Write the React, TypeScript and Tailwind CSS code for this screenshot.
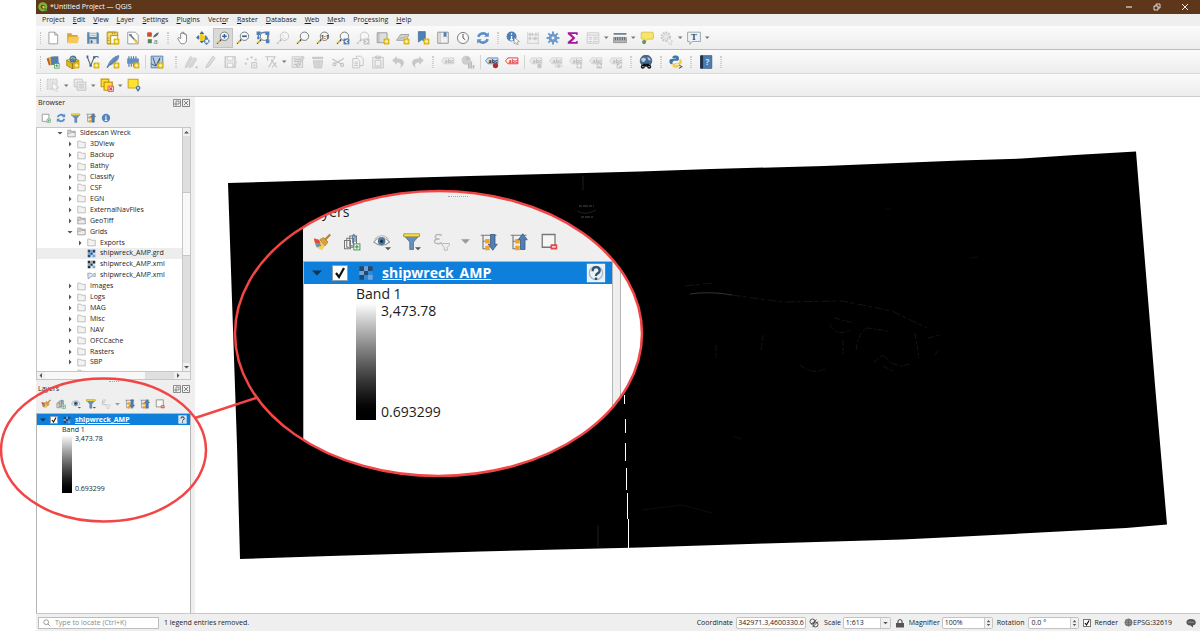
import React, { useId, useState } from 'react';

const GOLD = '#d9b310';
const BLUE = '#4f7fb5';
const GRAY = '#6f7471';

const NewBadge: React.FC<{ x?: number; y?: number }> = ({ x = 13, y = 13 }) => (
  <g>
    <rect x={x} y={y} width="10" height="10" rx="1.5" fill={GOLD} />
    <path
      d={`M${x + 5} ${y + 1.5}v7M${x + 1.5} ${y + 5}h7M${x + 2.5} ${y + 2.5}l5 5M${x + 7.5} ${y + 2.5}l-5 5`}
      stroke="#fff8c9"
      strokeWidth="1.2"
    />
  </g>
);

const GreenPlus: React.FC = () => (
  <g>
    <rect x="14.5" y="14.5" width="8" height="8" fill="#fff" stroke="#4a9a59" strokeWidth="1.4" />
    <path d="M18.5 16v5M16 18.5h5" stroke="#4a9a59" strokeWidth="1.8" />
  </g>
);

const Lens: React.FC<{ children?: React.ReactNode }> = ({ children }) => (
  <g>
    <path d="M9 14.5L6.5 17" stroke="#333" strokeWidth="2.5" />
    <path d="M7 16.5L2 21.5" stroke="#d8b52c" strokeWidth="3.2" />
    <path d="M3 22l-1.5-1.5" stroke="#222" strokeWidth="1.5" />
    <circle cx="14.5" cy="9" r="7.2" fill="#f6f8f8" stroke={GRAY} strokeWidth="1.6" />
    {children}
  </g>
);

const Tag: React.FC<{ color?: string; fill?: string; text?: string }> = ({
  color = '#9b9b92',
  fill = '#deded4',
  text = '#555',
}) => (
  <g>
    <path d="M1 10l4-5h17v10H5z" fill={fill} stroke={color} strokeWidth="1.5" />
    <text x="6" y="13" fontSize="9" fontWeight="bold" fontFamily="Open Sans, sans-serif" fill={text}>
      abc
    </text>
  </g>
);

const Checker: React.FC<{ light?: string; dark?: string }> = ({ light = '#6fa3d8', dark = '#24496e' }) => (
  <g>
    <path d="M2 2h20v20H2z" fill={light} opacity=".3" />
    <path d="M2 2h7v7H2zM15 2h7v7h-7zM9 9h6v6H9zM2 15h7v7H2z" fill={dark} />
    <path d="M9 2h6v7H9zM2 9h7v6H2zM15 15h7v7h-7z" fill={light} />
  </g>
);

const icons: Record<string, React.ReactNode> = {
  new: <path d="M5 2h10l5 5v15H5zM15 2v5h5" fill="#fff" stroke="#8a8a8a" strokeWidth="1.3" />,
  open: (
    <g>
      <path d="M2 4h7l2 3h9v13H2z" fill="#d8a530" />
      <path d="M5 10h18l-3 11H2z" fill="#f6c95b" />
    </g>
  ),
  save: (
    <g>
      <path d="M2 2h18l2 2v18H2z" fill="#5b86ad" />
      <path d="M6 2h12v8H6z" fill="#f5f5f5" />
      <path d="M7 4.5h10M7 7.5h10" stroke="#888" />
      <path d="M6 14h12v8H6z" fill="#dcdcdc" />
      <path d="M8 16h3v5H8z" fill="#44617d" />
    </g>
  ),
  layout: (
    <g>
      <path d="M4 2h11l5 5v15H4z" fill="#fff" stroke={GOLD} strokeWidth="2" />
      <path d="M2 2v20h6V8h12V2z" fill="#f5dd72" stroke="#a9860b" strokeWidth="1.5" />
      <path d="M11 3v3M15 3v3M3 12h3M3 16h3" stroke="#7a6208" />
      <NewBadge />
    </g>
  ),
  layoutManager: (
    <g>
      <path d="M3 2h13l5 5v15H3z" fill="#fff" stroke="#8a8a8a" strokeWidth="1.4" />
      <path d="M7 7l11 11" stroke="#5f6f7e" strokeWidth="2.5" />
      <path d="M5 5h5v4H6z" fill="#7a8792" />
      <path d="M15 13l7 8-3 2-6-7z" fill="#e8c33b" />
    </g>
  ),
  style: (
    <g>
      <rect x="2" y="2" width="8" height="8" rx="2" fill="#c94f2c" />
      <rect x="3" y="14" width="7" height="7" fill="#4f8a5c" />
      <path d="M12 11c1-4 5-8 10-9-1 5-4 8-9 9z" fill="#5a6c72" />
      <text x="13" y="22" fontSize="13" fontFamily="Open Sans, sans-serif" fill="#4f8a5c">a</text>
    </g>
  ),
  hand: (
    <path
      d="M8 13V5c0-2 2.5-2 2.5 0V3c0-2 2.5-2 2.5 0v2c0-2 2.5-2 2.5 0v2c0-2 2.5-2 2.5 0v8c0 4-2 7-6 7-3 0-5-1-6-4l-3-5c0-2 2-2 3-1z"
      fill="#fff"
      stroke="#707070"
      strokeWidth="1.4"
    />
  ),
  pan: (
    <g>
      <path d="M7 3h6v5h5v6h-5v5H7v-5H2V8h5z" fill="#efca2d" />
      <path d="M10 0l4 5H6zM0 11l5-4v8zM20 11l-4-4v8zM10 21l4-4H6z" fill="#3f6fa8" />
      <path d="M18 10l4 5h-8zM18 24l4-4h-8zM12 17l4-3v7zM24 17l-3-3v7z" fill={BLUE} />
      <path d="M8 9h4v4H8z" fill="#efca2d" />
    </g>
  ),
  zoomIn: (
    <Lens>
      <path d="M14.5 5v8M10.5 9h8" stroke="#38639b" strokeWidth="2.5" />
    </Lens>
  ),
  zoomOut: (
    <Lens>
      <path d="M10.5 9h8" stroke="#38639b" strokeWidth="3" />
    </Lens>
  ),
  zoomFull: (
    <g>
      <Lens />
      <path d="M1 1h7v6H1zM16 1h7v6h-7zM17 14h6v7h-6zM2 10h4v4H2z" fill={BLUE} />
      <path d="M8 3h8M20 7v8M4 6v5" stroke={BLUE} strokeWidth="2" />
    </g>
  ),
  zoomLayer: <Lens />,
  zoomSelection: (
    <Lens>
      <path d="M12 5v8h5" stroke="#aaa" fill="none" />
    </Lens>
  ),
  zoomNative: (
    <Lens>
      <text x="8" y="13" fontSize="10" fontWeight="bold" fontFamily="Open Sans, sans-serif" fill="#444">1:1</text>
    </Lens>
  ),
  zoomLast: (
    <g>
      <Lens />
      <path d="M13 13h10v10H13z" fill={BLUE} />
      <path d="M20 15l-4 3 4 3" fill="none" stroke="#fff" strokeWidth="1.8" />
    </g>
  ),
  zoomNext: (
    <g>
      <Lens />
      <path d="M13 13h10v10H13z" fill={BLUE} />
      <path d="M16 15l4 3-4 3" fill="none" stroke="#fff" strokeWidth="1.8" />
    </g>
  ),
  mapView: (
    <g>
      <path d="M2 3h17v17H2z" fill="#dedede" stroke="#8f8f8f" strokeWidth="1.4" />
      <path d="M5 3v17" stroke="#8f8f8f" />
      <NewBadge />
    </g>
  ),
  view3d: (
    <g>
      <path d="M1 16L8 6h14l-4 10z" fill="#d4d4d4" stroke="#8f8f8f" strokeWidth="1.3" />
      <path d="M6 14c3-6 6 2 12-6" stroke="#8f8f8f" fill="none" />
      <NewBadge />
    </g>
  ),
  bookmarkNew: (
    <g>
      <path d="M4 1h12v18l-6-4-6 4z" fill={BLUE} stroke="#3b6290" />
      <NewBadge />
    </g>
  ),
  bookmarks: (
    <g>
      <path d="M3 2h18v19H3z" fill="#f1f1f1" stroke="#8f8f8f" strokeWidth="1.6" />
      <path d="M7 2v19" stroke="#8f8f8f" />
      <path d="M13 2h5v9l-2.5-2-2.5 2z" fill={BLUE} />
    </g>
  ),
  clock: (
    <g>
      <circle cx="12" cy="12" r="9.5" fill="#fafafa" stroke="#7d7d7d" strokeWidth="1.7" />
      <path d="M12 5v7l4 3" fill="none" stroke="#555" strokeWidth="1.7" />
    </g>
  ),
  refresh: (
    <g fill="none" stroke="#5c8fc9" strokeWidth="4.5">
      <path d="M4 10c2-6 10-8 15-3M20 14c-2 6-10 8-15 3" />
      <path d="M22 2v8h-8zM2 22v-8h8z" fill="#5c8fc9" stroke="none" />
    </g>
  ),
  identify: (
    <g>
      <circle cx="9.5" cy="9.5" r="8.5" fill={BLUE} />
      <path d="M9.5 4v2.5M9.5 8.5V15M7 15h5" stroke="#fff" strokeWidth="2.2" />
      <path d="M14 11l9 7-4 1 2 4-2 1-2-4-3 2z" fill="#fff" stroke="#777" />
    </g>
  ),
  abacus: (
    <g fill="none" stroke="#888" strokeWidth="1.4">
      <path d="M3 2v20M21 2v20M3 6h18M3 13h18M2 21h20" />
      <path d="M7 3v6M11 3v6M17 3v6M7 10v6M14 10v6M17 10v6" strokeWidth="2.5" />
    </g>
  ),
  gear: (
    <g fill="none" stroke="#6c9ad0">
      <circle cx="12" cy="12" r="5" strokeWidth="5" />
      <path d="M12 1v5M12 18v5M1 12h5M18 12h5M4 4l4 4M16 16l4 4M20 4l-4 4M8 16l-4 4" strokeWidth="3.4" />
    </g>
  ),
  sigma: <path d="M20 7V2H3v3l8 7-8 7v3h17v-5h-2l-1 2H9l7-7-7-7h8l1 2z" fill="#a5159c" />,
  table: (
    <g>
      <path d="M2 3h20v18H2z" fill="#eee" stroke="#888" strokeWidth="1.5" />
      <path d="M2 7h20M5 11h5M5 14h5M5 18h5M12 11h8M12 14h8M12 18h8" stroke="#888" strokeWidth="1.5" />
    </g>
  ),
  ruler: (
    <g>
      <path d="M1 5h22" stroke="#4d6a88" strokeWidth="2.5" />
      <path d="M1 11h22v9H1z" fill="#b4b4b4" stroke="#737373" />
      <path d="M4 11v5M8 11v5M12 11v5M16 11v5M20 11v5" stroke="#444" strokeWidth="1.3" />
    </g>
  ),
  mapTip: (
    <g>
      <path d="M4 2h17q2 0 2 2v8q0 2-2 2H13l-5 6V14H4q-2 0-2-2V4q0-2 2-2z" fill="#f6e46c" stroke="#c9ad20" />
      <circle cx="7" cy="19" r="3.5" fill="#64935f" />
    </g>
  ),
  action: (
    <g>
      <circle cx="10" cy="10" r="7" fill="none" stroke="#888" strokeWidth="4" strokeDasharray="3 1.5" />
      <circle cx="10" cy="10" r="4" fill="#ddd" stroke="#888" />
      <path d="M13 12l9 6-4 1 2 4-3 1-4-8z" fill="#fff" stroke="#777" />
    </g>
  ),
  textNote: (
    <g>
      <path d="M1 2h22v16H9l-4 5v-5H1z" fill="#edf3f5" stroke="#8a9ca3" strokeWidth="1.4" />
      <text x="7" y="15" fontSize="15" fontWeight="bold" fontFamily="Liberation Serif, serif" fill="#444">T</text>
    </g>
  ),
  dataSource: (
    <g>
      <path d="M1 6l12-3 3 11-11 4z" fill="#b95c2a" />
      <path d="M4 4l13-2 3 13-12 3z" fill="#e5b53b" />
      <path d="M8 3l13-1 1 14-13 1z" fill="#4f7fb5" />
      <GreenPlus />
    </g>
  ),
  geopackage: (
    <g>
      <path d="M1 9l10-4 11 4-11 6z" fill="#f6dc6f" stroke="#8c6f11" />
      <circle cx="12" cy="7" r="5.5" fill="#4f7fb5" stroke="#2b4f75" />
      <path d="M8 6q4-3 8 1" stroke="#9fd09c" strokeWidth="2" fill="none" />
      <path d="M1 9l10 6v9L1 18zM22 9l-11 6v9l11-6z" fill="#e2b71d" stroke="#8c6f11" />
      <NewBadge />
    </g>
  ),
  shapefile: (
    <g>
      <path d="M2 3l6 15L14 4q4-3 8 0" fill="none" stroke="#47657c" strokeWidth="1.8" />
      <path d="M1 1h3v4H1zM6 16h4v4H6zM12 2h4v4h-4z" fill="#47657c" />
      <NewBadge />
    </g>
  ),
  spatialite: (
    <g>
      <path d="M2 22C5 11 12 3 22 1c0 8-7 14-18 17z" fill="#6b97c7" stroke="#3e658f" />
      <path d="M2 22L18 5" stroke="#2e5074" />
      <NewBadge />
    </g>
  ),
  virtualLayer: (
    <g>
      <path d="M5 2v18M9 2v18M13 2v18M17 2v18" stroke="#4c6d91" strokeWidth="1.8" />
      <path d="M2 6h20v9H2z" fill="#5f8fc4" />
      <NewBadge />
    </g>
  ),
  meshLayer: (
    <g>
      <path d="M2 2h20v20H2z" fill="#b8cce2" stroke="#587fa8" strokeWidth="1.6" />
      <path d="M5 4l5 15L17 5M2 15l8 4M17 5l-3 10" fill="none" stroke="#34536f" strokeWidth="1.5" />
      <NewBadge />
    </g>
  ),
  pencils: (
    <g>
      <path d="M3 17L11 2l4 3L7 20l-5 2zM10 18L18 4l4 3-8 13-5 2z" fill="#aaa" stroke="#888" />
      <path d="M19 20h5l-2.5 3z" fill="#444" />
    </g>
  ),
  pencil: <path d="M5 17L15 2l4 3L9 19l-6 3z" fill="#bbb" stroke="#777" strokeWidth="1.4" />,
  saveEdit: (
    <g>
      <path d="M2 3h17v18H2z" fill="#ddd" stroke="#777" strokeWidth="2" />
      <path d="M6 3h9v6H6zM6 14h9v7H6z" fill="#fff" stroke="#777" />
      <path d="M14 20l6-10 3 2-6 9z" fill="#aaa" />
    </g>
  ),
  addPoint: (
    <g fill="#888">
      <circle cx="3" cy="15" r="2" />
      <circle cx="6" cy="7" r="2" />
      <circle cx="13" cy="4" r="2" />
      <circle cx="20" cy="8" r="2" />
      <path d="M13 13h9v9h-9z" fill="#eee" stroke="#777" strokeWidth="1.5" />
      <path d="M17.5 15v5M15 17.5h5" stroke="#777" />
    </g>
  ),
  vertex: (
    <g fill="none" stroke="#777" strokeWidth="1.8">
      <path d="M2 3h17L8 21M6 2v8M12 8l10 13M21 13l-7 8" />
    </g>
  ),
  modify: (
    <g>
      <path d="M2 3h18v18H2z" fill="#ddd" stroke="#777" strokeWidth="1.4" />
      <path d="M5 7h12M5 11h12M5 16h12" stroke="#777" strokeWidth="2" />
      <path d="M10 17L20 2l3 2-10 15-4 1z" fill="#aaa" stroke="#666" />
    </g>
  ),
  trash: (
    <g>
      <path d="M2 3h19v4H2z" fill="#888" />
      <path d="M4 10h16l-2 12H6z" fill="#bbb" stroke="#777" strokeWidth="1.5" />
      <path d="M9 11v9M12 11v9M15 11v9" stroke="#777" />
    </g>
  ),
  cut: (
    <g fill="none" stroke="#777" strokeWidth="2">
      <path d="M2 7l15 8M22 6L8 14" />
      <circle cx="6" cy="16" r="2.500" />
      <circle cx="19" cy="17" r="2.500" />
    </g>
  ),
  copy: (
    <g fill="#f4f4f4" stroke="#777" strokeWidth="1.5">
      <path d="M9 2h8l4 4v12H9z" />
      <path d="M3 6h8l4 4v12H3zM6 12h6M6 15h6M6 18h6" />
    </g>
  ),
  paste: (
    <g fill="#eee" stroke="#777" strokeWidth="1.6">
      <path d="M3 4h18v18H3zM8 2h8v4H8zM7 9h10v10H7z" />
    </g>
  ),
  undo: <path d="M2 9l8-7v4c8 0 13 3 12 9-1 3-4 6-7 7 4-5 2-9-5-9v4z" fill="#888" />,
  redo: <path d="M22 9l-8-7v4C6 6 1 9 2 15c1 3 4 6 7 7-4-5-2-9 5-9v4z" fill="#888" />,
  tag: <Tag />,
  diagram: (
    <g>
      <circle cx="9" cy="9" r="7" fill="#999" stroke="#666" />
      <path d="M9 9V2l7 5zM12 14h3v9h-3zM16 11h3v12h-3zM20 17h3v6h-3z" fill="#666" />
    </g>
  ),
  tagPinned: (
    <g>
      <Tag color="#4f86c6" fill="#cfe2f8" text="#222" />
      <circle cx="18" cy="18" r="4.5" fill="#b3282d" />
    </g>
  ),
  tagRed: <Tag color="#e32626" fill="#fff" text="#e32626" />,
  tagDot: (
    <g>
      <Tag />
      <circle cx="18" cy="19" r="4" fill="#888" />
    </g>
  ),
  tagEye: (
    <g>
      <Tag />
      <path d="M10 19q6-6 13 0-6 5-13 0z" fill="#eee" stroke="#777" />
      <circle cx="16.500" cy="19" r="2" fill="#777" />
    </g>
  ),
  tagMove: (
    <g>
      <Tag />
      <path d="M13 14h9v9h-9z" fill="#888" />
      <path d="M17.5 15v7M14 18.5h7" stroke="#fff" strokeWidth="2" />
    </g>
  ),
  tagRotate: (
    <g>
      <Tag />
      <path d="M13 14h9v9h-9z" fill="#888" />
      <path d="M15 20q2-6 5 0" fill="none" stroke="#fff" strokeWidth="2" />
    </g>
  ),
  tagEdit: (
    <g>
      <Tag />
      <path d="M13 14h9v9h-9z" fill="#888" />
      <path d="M15 21l6-6" stroke="#fff" strokeWidth="2" />
    </g>
  ),
  globeSearch: (
    <g>
      <circle cx="12" cy="10" r="10" fill="#44688f" stroke="#29435f" />
      <path d="M4 6q5-3 8 1-1 5-5 5-4-2-3-6zM14 4q5 0 6 5-4 2-6-5z" fill="#b9cde3" />
      <path d="M7 15h10v4H7z" fill="#111" />
      <circle cx="6.5" cy="20" r="3.500" fill="#111" />
      <circle cx="17.5" cy="20" r="3.500" fill="#111" />
      <path d="M5 20h3M16 20h3" stroke="#ccc" strokeWidth="1.5" />
    </g>
  ),
  python: (
    <g>
      <path d="M11 1C6 1 6 3 6 6h6v1H4c-3 0-4 3-3 6 1 3 3 3 5 3v-3c0-2 2-3 4-3h4c2 0 3-1 3-3V5c0-3-3-4-6-4z" fill="#3c78aa" />
      <path d="M11 22c5 0 6-2 6-5h-6v-1h8c3 0 4-3 3-6-1-3-2-3-4-3v3c0 2-2 4-4 4h-4c-2 0-4 1-4 3v2c0 2 2 3 5 3z" fill="#fbcf3f" />
      <path d="M17 17l5 3-5 3" fill="none" stroke="#555" strokeWidth="1.8" />
    </g>
  ),
  help: (
    <g>
      <path d="M3 1h19v22H3z" fill="#4b7cb0" stroke="#2a4667" />
      <path d="M2 1h5v22H2z" fill="#1e3046" />
      <text x="11" y="17" fontSize="14" fontWeight="bold" fontFamily="Open Sans, sans-serif" fill="#cfe3f9">?</text>
    </g>
  ),
  select: (
    <g>
      <path d="M2 2h17v17H2z" fill="#ccc" stroke="#777" strokeWidth="1.5" strokeDasharray="3 1.5" />
      <path d="M11 8l11 8-5 1 3 5-3 1-3-5-3 3z" fill="#fff" stroke="#777" />
    </g>
  ),
  selectForm: (
    <g fill="#ddd" stroke="#777" strokeWidth="1.5">
      <path d="M2 2h14v13H2z" />
      <path d="M7 7h15v14H7zM10 11h9M10 14h9M10 17h9" />
    </g>
  ),
  deselect: (
    <g>
      <path d="M2 2h13v13H2z" fill="#ffe32b" stroke="#c39412" strokeWidth="2" />
      <path d="M7 7h14v14H7z" fill="#ffe32b" stroke="#c39412" strokeWidth="2" />
      <path d="M14 14h9v9h-9z" fill="#fff" stroke="#dc4040" strokeWidth="1.5" />
      <path d="M16 16l5 5M21 16l-5 5" stroke="#dc4040" strokeWidth="2" />
    </g>
  ),
  selectLocation: (
    <g>
      <path d="M2 2h17v15H2z" fill="#ffe32b" stroke="#c9a41a" strokeWidth="1.8" />
      <path d="M19 24c-2-4-4-5-4-7 0-5 8-5 8 0 0 2-2 3-4 7z" fill="#4e7ca3" />
      <circle cx="19" cy="17" r="1.5" fill="#fff" />
    </g>
  ),
  addLayer: (
    <g>
      <path d="M3 3h16v17H3z" fill="#fff" stroke="#777" strokeWidth="1.6" />
      <GreenPlus />
    </g>
  ),
  filter: (
    <g>
      <path d="M1 4h20l-7 9v10H9V13z" fill="#6690bd" stroke="#46698f" />
      <path d="M1 2h20v4H1z" fill="#f3dd4b" stroke="#a68b23" />
    </g>
  ),
  collapse: (
    <g>
      <path d="M1 3h21" stroke="#777" strokeWidth="1.6" />
      <path d="M4 3v18h5M4 11h5" fill="none" stroke="#777" strokeWidth="1.5" />
      <path d="M7 8h6v6H7zM7 17h6v6H7z" fill="#f0a22b" />
      <path d="M17 1l6 8h-3v13h-6V9h-3z" fill="#527fb3" stroke="#31547c" />
    </g>
  ),
  expand: (
    <g>
      <path d="M1 3h21" stroke="#777" strokeWidth="1.6" />
      <path d="M4 3v18h5M4 11h5" fill="none" stroke="#777" strokeWidth="1.5" />
      <path d="M7 8h6v6H7zM7 17h6v6H7z" fill="#f0a22b" />
      <path d="M17 23l6-8h-3V2h-6v13h-3z" fill="#527fb3" stroke="#31547c" />
    </g>
  ),
  info: (
    <g>
      <circle cx="12" cy="12" r="10" fill="#5384bd" />
      <path d="M12 6v2.5M12 10v8M9 18h6M10 10.5h2" stroke="#fff" strokeWidth="2.5" />
    </g>
  ),
  brush: (
    <g>
      <path d="M1 9l7 1 8 7-4 6-8-4z" fill="#f3cf55" />
      <path d="M1 7l7 2 2 4-7 1z" fill="#e2483b" />
      <path d="M3 14l6-1 2 4-6 2z" fill="#5b8fd0" />
      <path d="M9 9l5-3 6 6-4 5z" fill="#e0a13a" stroke="#a87420" />
      <path d="M16 9l7-7" stroke="#b98032" strokeWidth="3" />
    </g>
  ),
  addGroup: (
    <g>
      <path d="M2 10h8v11H2zM5 7h9v12H5zM9 4h9v13H9z" fill="#f6f6f6" stroke="#777" strokeWidth="1.4" />
      <path d="M13 14V4q1-4 3 0v8" fill="none" stroke="#4a7398" strokeWidth="1.5" />
      <GreenPlus />
    </g>
  ),
  eye: (
    <g>
      <path d="M1 12q10-12 21 0-10 9-21 0z" fill="#fff" stroke="#999" strokeWidth="1.5" />
      <path d="M2 8Q12-1 21 8" fill="none" stroke="#aaa" strokeWidth="1.2" />
      <circle cx="11.5" cy="11" r="5" fill="#4d74a0" />
      <circle cx="11.5" cy="11" r="2" fill="#1d2e42" />
      <path d="M16 19h8l-4 4z" fill="#555" />
    </g>
  ),
  filterMenu: (
    <g>
      <path d="M1 3h21l-8 9v10H9V12z" fill="#6690bd" stroke="#46698f" />
      <path d="M1 1h21v4H1z" fill="#f3dd4b" stroke="#a68b23" />
      <path d="M16 19h8l-4 4z" fill="#555" />
    </g>
  ),
  epsilon: (
    <g fill="none" stroke="#777" strokeWidth="2">
      <path d="M12 3q-8-3-9 2 0 3 6 3-8 0-7 4 2 4 10 1" />
      <path d="M12 14h10v2l-3 3v4h-4v-4l-3-3z" strokeWidth="1.300" />
    </g>
  ),
  removeLayer: (
    <g>
      <path d="M3 2h17v17H3z" fill="#f6f6f2" stroke="#777" strokeWidth="1.7" />
      <rect x="14" y="15" width="9" height="7" rx="1" fill="#e54848" />
      <path d="M16 18.5h5" stroke="#fff" strokeWidth="1.8" />
    </g>
  ),
  checker: <Checker />,
  checkerDark: <Checker light="#8ba6bd" dark="#22303c" />,
  folder: <path d="M2 3h8l2 3h10v15H2z" fill="#f3f3f3" stroke="#9c9c9c" strokeWidth="1.6" />,
  folderOpen: (
    <g fill="#ececec" stroke="#7c7c7c" strokeWidth="1.6">
      <path d="M2 3h8l2 3h10v15H2z" />
      <path d="M2 11h7l3-2h10M6 6h5" />
    </g>
  ),
  polygon: <path d="M2 6h9l4 3 7-3v9l-6-2-5 2-8 6z" fill="#dfe8f2" stroke="#6c86a6" strokeWidth="1.7" />,
  question: (
    <g>
      <path d="M1 1h22v22H1z" fill="#e9f1f9" />
      <circle cx="12" cy="12" r="8" fill="none" stroke="#9fb6c8" strokeWidth="1.4" />
      <path d="M8 10q0-5 4-5t4.500 4q0 2-2.500 3.500-2 1-2 3M12 17.500v3" fill="none" stroke="#33526e" strokeWidth="2.800" />
    </g>
  ),
};

const Icon: React.FC<{ name: string; className: string }> = ({ name, className }) => (
  <svg viewBox="0 0 24 24" className={className} aria-hidden="true">
    {icons[name]}
  </svg>
);

type Item =
  | { kind: 'grip' | 'arrow' | 'sep' | 'space' }
  | { kind: 'icon'; name: string; label: string; off?: boolean; on?: boolean };

const grip: Item = { kind: 'grip' };
const arrow: Item = { kind: 'arrow' };
const sep: Item = { kind: 'sep' };
const space: Item = { kind: 'space' };
const btn = (name: string, label: string): Item => ({ kind: 'icon', name, label });
const dim = (name: string, label: string): Item => ({ kind: 'icon', name, label, off: true });

const mainToolbar: Item[] = [
  btn('new', 'New project'), btn('open', 'Open project'), btn('save', 'Save project'),
  btn('layout', 'New print layout'), btn('layoutManager', 'Layout manager'), btn('style', 'Style manager'),
  grip,
  btn('hand', 'Pan map'), btn('pan', 'Pan to selection'),
  { kind: 'icon', name: 'zoomIn', label: 'Zoom in', on: true },
  btn('zoomOut', 'Zoom out'), btn('zoomFull', 'Zoom full'), dim('zoomSelection', 'Zoom to selection'),
  btn('zoomLayer', 'Zoom to layer'), btn('zoomNative', 'Native resolution'), btn('zoomLast', 'Zoom last'),
  dim('zoomNext', 'Zoom next'), btn('mapView', 'New map view'), btn('view3d', 'New 3D map view'),
  btn('bookmarkNew', 'New bookmark'), btn('bookmarks', 'Show bookmarks'), btn('clock', 'Temporal controller'),
  btn('refresh', 'Refresh'),
  grip,
  btn('identify', 'Identify features'), dim('abacus', 'Field calculator'), btn('gear', 'Toolbox'),
  btn('sigma', 'Statistics'), dim('table', 'Attribute table'), arrow, btn('ruler', 'Measure'), arrow,
  btn('mapTip', 'Map tips'), dim('action', 'Run action'), arrow, btn('textNote', 'Text annotation'), arrow,
];

const editToolbar: Item[] = [
  btn('dataSource', 'Data source manager'), btn('geopackage', 'New GeoPackage layer'),
  btn('shapefile', 'New shapefile layer'), btn('spatialite', 'New SpatiaLite layer'),
  btn('virtualLayer', 'New virtual layer'), sep, btn('meshLayer', 'New mesh layer'),
  space, grip,
  dim('pencils', 'Current edits'), dim('pencil', 'Toggle editing'), dim('saveEdit', 'Save layer edits'),
  dim('addPoint', 'Add feature'), dim('vertex', 'Vertex tool'), arrow, dim('modify', 'Modify attributes'),
  dim('trash', 'Delete selected'), dim('cut', 'Cut features'), dim('copy', 'Copy features'),
  dim('paste', 'Paste features'), dim('undo', 'Undo'), dim('redo', 'Redo'),
  grip,
  dim('tag', 'Layer labeling'), dim('diagram', 'Layer diagram'), sep,
  btn('tagPinned', 'Highlight pinned labels'), btn('tagRed', 'Toggle unplaced labels'), sep,
  dim('tagDot', 'Pin labels'), dim('tagEye', 'Show or hide labels'), dim('tagMove', 'Move label'),
  dim('tagRotate', 'Rotate label'), dim('tagEdit', 'Change label'),
  grip, btn('globeSearch', 'MetaSearch'), grip, btn('python', 'Python console'), grip, btn('help', 'Help contents'), grip,
];

const selectToolbar: Item[] = [
  dim('select', 'Select features'), arrow, dim('selectForm', 'Select by value'), arrow,
  btn('deselect', 'Deselect features'), arrow, btn('selectLocation', 'Select by location'),
];

const Toolbar: React.FC<{ items: Item[]; label: string; className: string }> = ({ items, label, className }) => (
  <div
    role="toolbar"
    aria-label={label}
    className={`flex shrink-0 items-center border-b bg-linear-to-b from-[#fbfbfb] to-[#ededed] ${className}`}
  >
    <span className="ml-1 mr-px h-3 w-0.5 border-l border-dotted border-[#c4c4c4]" />
    {items.map((item, i) => {
      if (item.kind === 'grip') {
        return (
          <span key={i} className="flex w-2.5 shrink-0 justify-center">
            <span className="h-3 w-0.5 border-x border-dotted border-[#cecece]" />
          </span>
        );
      }
      if (item.kind === 'sep') {
        return (
          <span key={i} className="flex w-1 shrink-0 justify-center">
            <span className="h-3.5 w-px bg-[#d4d4d4]" />
          </span>
        );
      }
      if (item.kind === 'space') return <span key={i} className="w-1 shrink-0" />;
      if (item.kind === 'arrow') {
        return (
          <svg key={i} viewBox="0 0 7 7" className="size-[7px] shrink-0">
            <path d="M1 2.5h4.500L3.200 5z" fill="#777" />
          </svg>
        );
      }
      return (
        <button
          key={i}
          type="button"
          aria-label={item.label}
          disabled={item.off}
          className={`flex size-5 shrink-0 items-center justify-center ${item.on ? 'border border-[#c2c2c2] bg-[#d9d9d9]' : ''}`}
        >
          <Icon name={item.name} className={item.off ? 'size-3.5 opacity-40 grayscale' : 'size-3.5'} />
        </button>
      );
    })}
  </div>
);

const menus: [string, number][] = [
  ['Project', 3], ['Edit', 0], ['View', 0], ['Layer', 0], ['Settings', 0], ['Plugins', 0], ['Vector', 4],
  ['Raster', 0], ['Database', 0], ['Web', 0], ['Mesh', 0], ['Processing', 3], ['Help', 0],
];

const TitleBar: React.FC = () => (
  <header className="flex h-3.5 shrink-0 items-center bg-[#5e361a] text-white">
    <svg viewBox="0 0 24 24" className="mx-0.5 size-2.5">
      <circle cx="11.5" cy="11.5" r="8" fill="#5e361a" stroke="#7fb239" strokeWidth="6" />
      <path d="M12 12l9 10" stroke="#54902e" strokeWidth="5" />
      <path d="M11 10l4 4" stroke="#f1d641" strokeWidth="4" />
    </svg>
    <h1>*Untitled Project — QGIS</h1>
    <div className="ml-auto flex gap-3.5 pr-2">
      <button type="button" aria-label="Minimize" className="px-0.5">
        <svg viewBox="0 0 10 10" className="size-2.5"><path d="M2 5h6" stroke="#fff" /></svg>
      </button>
      <button type="button" aria-label="Restore" className="px-0.5">
        <svg viewBox="0 0 10 10" className="size-2.5">
          <path d="M2 4h4v4H2zM4 4V2h4v4H6" fill="none" stroke="#fff" strokeWidth=".8" />
        </svg>
      </button>
      <button type="button" aria-label="Close" className="px-0.5">
        <svg viewBox="0 0 10 10" className="size-2.5"><path d="M2 2l6 6M8 2L2 8" stroke="#fff" strokeWidth=".9" /></svg>
      </button>
    </div>
  </header>
);

const MenuBar: React.FC = () => (
  <nav className="flex h-3 shrink-0 items-center gap-2 bg-[#efefef] pl-1.5">
    {menus.map(([name, key]) => (
      <button key={name} type="button">
        {name.slice(0, key)}
        <span className="underline">{name[key]}</span>
        {name.slice(key + 1)}
      </button>
    ))}
  </nav>
);

const DockButtons: React.FC = () => (
  <div className="ml-auto flex gap-px">
    <button type="button" aria-label="Float panel">
      <svg viewBox="0 0 8 8" className="size-2" fill="none" stroke="#777" strokeWidth=".8">
        <path d="M.5.5h7v7h-7zM2 4h2v2H2zM3 3V2h3v3H5" />
      </svg>
    </button>
    <button type="button" aria-label="Close panel">
      <svg viewBox="0 0 8 8" className="size-2" fill="none" stroke="#666" strokeWidth=".8">
        <path d="M.5.5h7v7h-7zM2 2l4 4M6 2L2 6" />
      </svg>
    </button>
  </div>
);

type Node = { name: string; depth: number; icon: string; state?: 'open' | 'closed'; selected?: boolean };

const tree: Node[] = [
  { name: 'Sidescan Wreck', depth: 0, icon: 'folderOpen', state: 'open' },
  { name: '3DView', depth: 1, icon: 'folder', state: 'closed' },
  { name: 'Backup', depth: 1, icon: 'folder', state: 'closed' },
  { name: 'Bathy', depth: 1, icon: 'folder', state: 'closed' },
  { name: 'Classify', depth: 1, icon: 'folder', state: 'closed' },
  { name: 'CSF', depth: 1, icon: 'folder', state: 'closed' },
  { name: 'EGN', depth: 1, icon: 'folder', state: 'closed' },
  { name: 'ExternalNavFiles', depth: 1, icon: 'folder', state: 'closed' },
  { name: 'GeoTiff', depth: 1, icon: 'folderOpen', state: 'closed' },
  { name: 'Grids', depth: 1, icon: 'folderOpen', state: 'open' },
  { name: 'Exports', depth: 2, icon: 'folder', state: 'closed' },
  { name: 'shipwreck_AMP.grd', depth: 2, icon: 'checker', selected: true },
  { name: 'shipwreck_AMP.xml', depth: 2, icon: 'checkerDark' },
  { name: 'shipwreck_AMP.xml', depth: 2, icon: 'polygon' },
  { name: 'Images', depth: 1, icon: 'folder', state: 'closed' },
  { name: 'Logs', depth: 1, icon: 'folder', state: 'closed' },
  { name: 'MAG', depth: 1, icon: 'folder', state: 'closed' },
  { name: 'Misc', depth: 1, icon: 'folder', state: 'closed' },
  { name: 'NAV', depth: 1, icon: 'folder', state: 'closed' },
  { name: 'OFCCache', depth: 1, icon: 'folder', state: 'closed' },
  { name: 'Rasters', depth: 1, icon: 'folder', state: 'closed' },
  { name: 'SBP', depth: 1, icon: 'folder', state: 'closed' },
  { name: '', depth: 1, icon: 'folder' },
];

const indents = ['pl-[19px]', 'pl-[29px]', 'pl-[39px]'];

const browserTools: [string, string][] = [
  ['addLayer', 'Add selected layers'], ['refresh', 'Refresh'], ['filter', 'Filter browser'],
  ['collapse', 'Collapse all'], ['info', 'Properties'],
];

const BrowserPanel: React.FC = () => (
  <section className="shrink-0">
    <div className="flex h-3 items-center pl-0.5 pr-px">
      <h2>Browser</h2>
      <DockButtons />
    </div>
    <div className="flex h-[18px] items-center pl-0.5">
      {browserTools.map(([name, label]) => (
        <button key={name} type="button" aria-label={label} className="flex w-[15px] justify-center">
          <Icon name={name} className="size-2.5" />
        </button>
      ))}
    </div>
    <div className="border border-[#c6c6c6] bg-white">
      <div className="flex h-[243px]">
        <div className="min-w-0 flex-1 overflow-hidden">
          <ul className="flex h-[251px] flex-col">
            {tree.map((node, i) => (
              <li
                key={i}
                className={`flex flex-1 items-center whitespace-nowrap ${indents[node.depth]} ${node.selected ? 'bg-[#ededed]' : ''}`}
              >
                <svg viewBox="0 0 8 8" className="mr-[3px] size-2">
                  {node.state === 'open' && <path d="M1.500 3h5L4 5.500z" fill="#555" />}
                  {node.state === 'closed' && <path d="M3 1.500v5L5.500 4z" fill="#555" />}
                </svg>
                <Icon name={node.icon} className="mr-1 size-[9px]" />
                {node.name}
              </li>
            ))}
          </ul>
        </div>
        <div className="flex w-2 shrink-0 flex-col border-l border-[#c6c6c6] bg-[#dfdfdf]">
          <svg viewBox="0 0 7 8" className="h-2 bg-[#f1f1f1]"><path d="M1 5.500h5L3.500 3z" fill="#555" /></svg>
          <div className="mt-14 h-16 border-y border-[#c6c6c6] bg-[#f8f8f8]" />
          <svg viewBox="0 0 7 8" className="mt-auto h-2 bg-[#f1f1f1]"><path d="M1 3h5L3.500 5.500z" fill="#555" /></svg>
        </div>
      </div>
      <div className="flex h-2 border-t border-[#c6c6c6] bg-[#dfdfdf]">
        <svg viewBox="0 0 8 7" className="w-2 bg-[#f1f1f1]"><path d="M5 1v5L2.500 3.500z" fill="#555" /></svg>
        <div className="w-[100px] bg-[#f8f8f8]" />
        <svg viewBox="0 0 8 7" className="ml-auto w-2 bg-[#f1f1f1]"><path d="M3 1v5l2.500-2.500z" fill="#555" /></svg>
        <span className="w-2 bg-[#f1f1f1]" />
      </div>
    </div>
  </section>
);

const layerTools: [string, string][] = [
  ['brush', 'Layer styling'], ['addGroup', 'Add group'], ['eye', 'Manage map themes'],
  ['filterMenu', 'Filter legend'], ['epsilon', 'Filter by expression'], ['arrow', ''],
  ['expand', 'Expand all'], ['collapse', 'Collapse all layers'], ['removeLayer', 'Remove layer'],
];

const LayersPanel: React.FC<{ large?: boolean }> = ({ large = false }) => {
  const id = useId();
  const [visible, setVisible] = useState(true);

  return (
    <section className="flex flex-1 flex-col">
      <div className={large ? 'flex h-[11px] items-center justify-center' : 'flex h-[3px] items-center justify-center'}>
        <span className={large ? 'w-5 border-t border-dotted border-[#aaa]' : 'w-2.5 border-t border-dotted border-[#aaa]'} />
      </div>
      <div className={large ? 'flex h-5 items-center pl-1 text-[14px]' : 'flex h-3 items-center pl-0.5 pr-px'}>
        <h2>Layers</h2>
        {!large && <DockButtons />}
      </div>
      <div className={large ? 'flex h-[39px] items-center pl-1' : 'flex h-[18px] items-center pl-0.5'}>
        {layerTools.map(([name, label]) =>
          name === 'arrow' ? (
            <svg key={name} viewBox="0 0 9 9" className={large ? 'h-4 w-[17px]' : 'size-[9px]'}>
              <path d="M2 3h5L4.500 5.500z" fill="#999" />
            </svg>
          ) : (
            <button
              key={name}
              type="button"
              aria-label={label}
              disabled={name === 'epsilon'}
              className={`flex justify-center disabled:opacity-45 ${large ? 'w-[30px]' : 'w-[15px]'}`}
            >
              <Icon name={name} className={large ? 'size-[18px]' : 'size-2.5'} />
            </button>
          )
        )}
      </div>
      <div className="flex-1 border-x border-t border-[#b5b5b5] bg-white">
        <div className={`flex items-center bg-[#0f7fdc] text-white ${large ? 'h-[22px] gap-2 pl-2 pr-1.5' : 'h-[11px] gap-1 pl-[3px] pr-[3px]'}`}>
          <svg viewBox="0 0 8 8" className={large ? 'mr-0.5 size-2.5' : 'size-1.5'}>
            <path d="M0 2h8L4 6z" fill="#12354f" />
          </svg>
          <span className={large ? 'relative flex size-4' : 'relative flex size-2'}>
            <input
              id={id}
              type="checkbox"
              checked={visible}
              onChange={(e) => setVisible(e.target.checked)}
              className="size-full appearance-none border border-[#8fa0ad] bg-white"
            />
            {visible && (
              <svg viewBox="0 0 16 16" className="pointer-events-none absolute inset-0 size-full">
                <path d="M4 8l3 4 5-9" fill="none" stroke="#111" strokeWidth="2.200" />
              </svg>
            )}
          </span>
          <span className={large ? 'flex pl-0.5' : 'flex pl-px'}>
            <Icon name="checker" className={large ? 'size-4' : 'size-2'} />
          </span>
          <label htmlFor={id} className={large ? 'text-[14px] font-bold underline' : 'font-bold underline'}>
            shipwreck_AMP
          </label>
          <Icon name="question" className={large ? 'ml-auto size-5' : 'ml-auto size-[9px]'} />
        </div>
        <div className={large ? 'pl-[52px]' : 'pl-[25px]'}>
          <p className={large ? 'text-[14px] leading-[19px]' : 'leading-[10px]'}>Band 1</p>
          <div className={large ? 'flex h-[117px] gap-[5px]' : 'flex h-[58px] gap-[3px]'}>
            <div className={`bg-linear-to-b from-white to-black ${large ? 'w-5' : 'w-2.5'}`} />
            <div className={`flex flex-col justify-between ${large ? 'text-[14px] leading-4' : 'leading-2'}`}>
              <span>3,473.78</span>
              <span>0.693299</span>
            </div>
          </div>
        </div>
      </div>
    </section>
  );
};

const RasterMap: React.FC = () => (
  <svg viewBox="195 97 1005 516" preserveAspectRatio="xMinYMin meet" className="h-full w-full">
    <path
      d="M228 183L330 180 470 176 585 173 640 171.500 711 169 824 166 886 163.500 960 160.500 1022 158.500 1075 155 1136 151.500 1145 262 1155 385 1167 524.500 1126 528 1040 532.500 954 537 902 539.500 765 543.500 640 547.500 480 551.500 330 556 240 559 237 445 232 300z"
      fill="#000"
    />
    <g fill="none" stroke="#fff">
      <path d="M624.500 395v9M625.500 419v14M625.500 443v18M626.500 468v22M627.500 493v26M628.500 519v29" />
      <path d="M579 206h15M581 217h12" strokeOpacity=".3" strokeDasharray="3 1 5 1" />
      <path d="M583 176v14M577 211q9 5 19-1M598 525v22" strokeOpacity=".12" />
      <path d="M690 294q20-3 42 1" strokeOpacity=".2" />
      <path d="M732 295l50 7 60-1 50 10 35 17M685 286l28-3" strokeOpacity=".08" strokeDasharray="9 2 4 3" />
      <path
        d="M856 350q3-20 12-22l20 3M834 318l20 5M843 340v14M874 362l9-7 8 8 10 3 10-2M883 366l10 5M915 333l4 25M935 355l3-4M716 345v13M763 335l-2 15M830 325q8 12 20 5M800 365q12 10 25 4M928 338l12-3"
        strokeOpacity=".08"
        strokeDasharray="6 2 3 1"
      />
      <path d="M885 209h6M970 258l8-1M733 436l8 3M642 510l40-5 30 8" strokeOpacity=".05" />
    </g>
  </svg>
);

const Spinner: React.FC<{ id: string; value: string }> = ({ id, value }) => (
  <span className="flex h-3 w-[51px] items-center rounded-xs border border-[#c3c3c3] bg-white">
    <input id={id} type="text" defaultValue={value} className="w-full min-w-0 px-0.5 outline-none" />
    <svg viewBox="0 0 8 10" className="h-2.5 w-2 shrink-0 border-l border-[#ccc] bg-[#f1f1f1]">
      <path d="M2 4l2-2.500L6 4zM2 6l2 2.500L6 6z" fill="#555" />
    </svg>
  </span>
);

const StatusBar: React.FC = () => (
  <footer className="flex h-[18px] shrink-0 items-center border-t border-[#c9c9c9] bg-[#efefef] pl-0.5 pr-1">
    <div className="flex h-3 w-[121px] items-center border border-[#bdbdbd] bg-white pl-1">
      <svg viewBox="0 0 10 10" className="mr-1 size-2" fill="none" stroke="#888">
        <circle cx="4" cy="4" r="3" />
        <path d="M6 6l3 3" />
      </svg>
      <input type="text" aria-label="Locator" placeholder="Type to locate (Ctrl+K)" className="min-w-0 flex-1 outline-none placeholder:text-[#8a8a8a]" />
    </div>
    <p className="ml-[5px]">1 legend entries removed.</p>
    <div className="ml-auto flex items-center">
      <label htmlFor="coordinate" className="mr-[3px]">Coordinate</label>
      <input id="coordinate" type="text" defaultValue="342971.3,4600330.6" className="h-3 w-[70px] rounded-xs border border-[#c3c3c3] bg-white text-center outline-none" />
      <button type="button" aria-label="Toggle extents" className="mx-[3px]">
        <svg viewBox="0 0 20 20" className="size-2.5" fill="none" stroke="#444" strokeWidth="1.800">
          <circle cx="7" cy="7" r="5" />
          <circle cx="13" cy="13" r="5" />
          <path d="M4 13l11-10M7 18L18 7" />
        </svg>
      </button>
      <label htmlFor="scale" className="mx-0.5">Scale</label>
      <span className="relative flex">
        <select id="scale" className="h-3 w-12 appearance-none rounded-xs border border-[#c3c3c3] bg-white pl-0.5 leading-[10px]">
          <option>1:613</option>
        </select>
        <svg viewBox="0 0 10 10" className="pointer-events-none absolute right-px top-px size-2.5 border-l border-[#ccc] bg-[#f1f1f1]">
          <path d="M2.500 4h5L5 6.500z" fill="#555" />
        </svg>
      </span>
      <button type="button" aria-label="Lock scale" className="mx-1">
        <svg viewBox="0 0 10 10" className="size-2.5">
          <path d="M3 5V3q2-3 4 0v2" fill="none" stroke="#555" strokeWidth="1.200" />
          <path d="M1 5h8v4.500H1z" fill="#555" />
        </svg>
      </button>
      <label htmlFor="magnifier" className="mr-0.5">Magnifier</label>
      <Spinner id="magnifier" value="100%" />
      <label htmlFor="rotation" className="ml-1 mr-1">Rotation</label>
      <Spinner id="rotation" value="0.0 °" />
      <span className="relative ml-1 mr-[3px] flex size-2">
        <input id="render" type="checkbox" defaultChecked className="peer size-2 appearance-none border border-[#777] bg-white" />
        <svg viewBox="0 0 8 8" className="pointer-events-none absolute inset-0 hidden size-2 peer-checked:block">
          <path d="M2 4l1.500 2L6 1.500" fill="none" stroke="#111" strokeWidth="1.200" />
        </svg>
      </span>
      <label htmlFor="render">Render</label>
      <button type="button" className="ml-1.5 flex items-center">
        <svg viewBox="0 0 10 10" className="size-[9px]" fill="#999" stroke="#666" strokeWidth=".8">
          <circle cx="5" cy="5" r="4" />
          <path d="M1 5h8M5 1v8M2 3h6M2 7h6" />
        </svg>
        EPSG:32619
      </button>
      <button type="button" aria-label="Messages" className="ml-3.5">
        <svg viewBox="0 0 10 10" className="size-2.5">
          <path d="M5 1c6 0 6 6 2 6.500L7 9.500 4.500 7.500C-1 7-1 1 5 1z" fill="#555" />
          <path d="M2.500 4.200h5" stroke="#ddd" strokeDasharray="1 1" />
        </svg>
      </button>
    </div>
  </footer>
);

export default function App() {
  return (
    <div className="relative flex h-screen flex-col overflow-hidden bg-white pl-9 font-['Open_Sans','Noto_Sans',sans-serif] text-[7px] leading-[10px] text-[#1c1c1c]">
      <TitleBar />
      <MenuBar />
      <Toolbar items={mainToolbar} label="Project and navigation" className="h-6 border-[#bdbdbd]" />
      <Toolbar items={editToolbar} label="Layers and editing" className="h-6 border-[#dadada]" />
      <Toolbar items={selectToolbar} label="Selection" className="h-[23px] border-[#cdcdcd]" />

      <div className="flex min-h-0 flex-1 bg-[#efefef]">
        <aside className="flex w-[155px] shrink-0 flex-col">
          <BrowserPanel />
          <LayersPanel />
        </aside>
        <div className="w-1 shrink-0" />
        <main className="min-w-0 flex-1 bg-white">
          <RasterMap />
        </main>
      </div>
      <StatusBar />

      {/* enlarged layers panel, floating over the map */}
      <div className="absolute left-[235px] top-[191px] flex h-[285px] w-[407px] overflow-hidden rounded-[50%] bg-black pl-[68px]">
        <div className="flex w-[310px] shrink-0 bg-[#efefef]">
          <LayersPanel large />
        </div>
        <div className="flex flex-1 flex-col bg-[#efefef]">
          <div className="h-[70px]" />
          <div className="flex flex-1">
            <div className="w-2 border-r border-[#b5b5b5]" />
            <div className="flex-1 bg-white" />
          </div>
        </div>
      </div>
      <svg viewBox="0 0 1200 631" className="pointer-events-none absolute left-0 top-0 w-[1200px]" fill="none" stroke="#f24545" strokeWidth="2.500">
        <ellipse cx="103.500" cy="450" rx="102.500" ry="71.500" />
        <ellipse cx="438.500" cy="333.500" rx="203.500" ry="142.500" />
        <path d="M195 418l61-20" />
      </svg>
    </div>
  );
}
